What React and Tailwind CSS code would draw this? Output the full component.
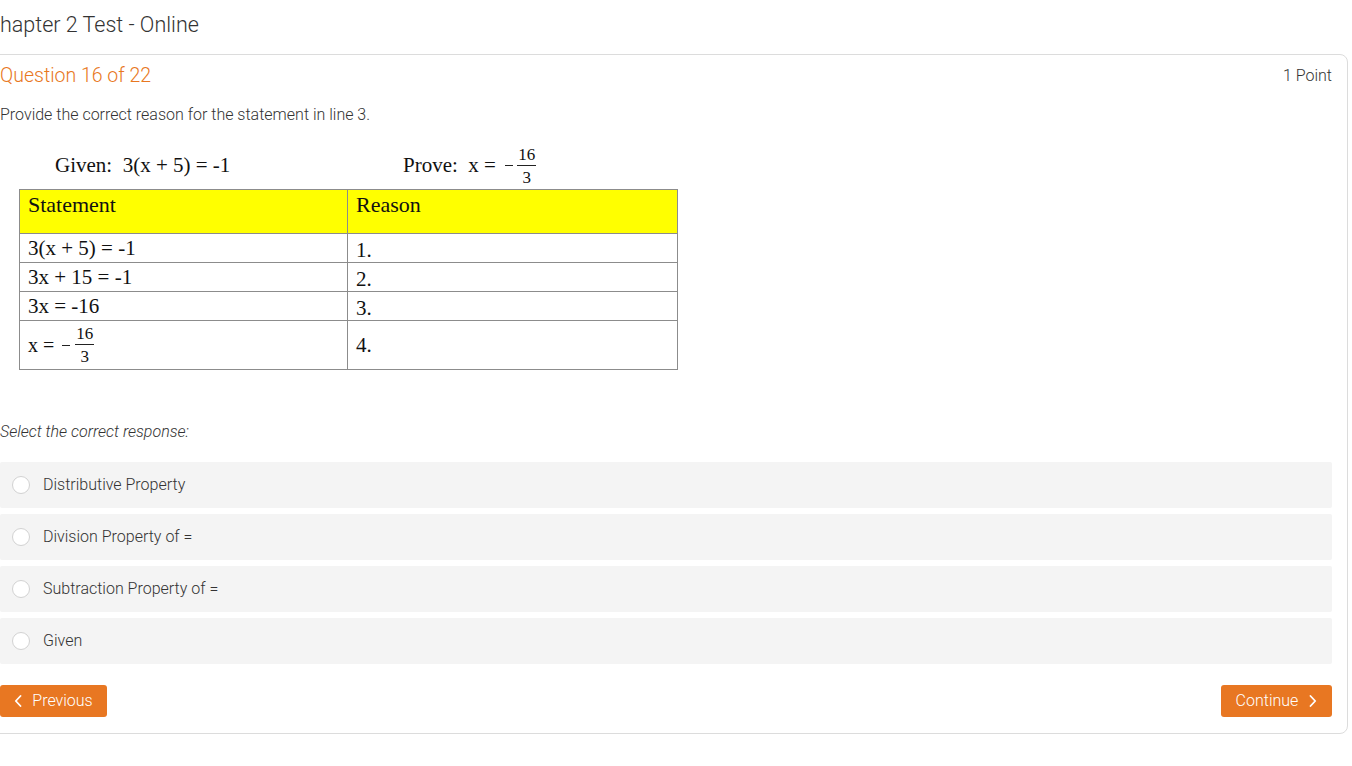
import React from "react";

const serif = { fontFamily: '"Liberation Serif", "Times New Roman", serif' };

function Frac({ n, d, size = "text-[17px]" }) {
  return (
    <span className={`inline-flex flex-col items-center align-middle leading-none ${size}`}>
      <span className="px-[1px] pb-[2px]">{n}</span>
      <span className="h-[1px] w-full bg-[#222]" />
      <span className="px-[1px] pt-[3px]">{d}</span>
    </span>
  );
}

function Chevron({ dir }) {
  return (
    <svg width="8" height="12" viewBox="0 0 8 12" fill="none" className="shrink-0">
      {dir === "left" ? (
        <path d="M6.5 1 L1.8 6 L6.5 11" stroke="white" strokeWidth="1.8" strokeLinecap="round" strokeLinejoin="round" />
      ) : (
        <path d="M1.5 1 L6.2 6 L1.5 11" stroke="white" strokeWidth="1.8" strokeLinecap="round" strokeLinejoin="round" />
      )}
    </svg>
  );
}

function Option({ label }) {
  return (
    <div className="flex h-[46px] items-center rounded-[2px] bg-[#f4f4f4] pl-[12px]">
      <span className="h-[18px] w-[18px] shrink-0 rounded-full border border-[#d2d2d2] bg-white" />
      <span className="ml-[13px] text-[16px] font-light text-[#333]">{label}</span>
    </div>
  );
}

export default function App() {
  const rows = [
    { s: "3(x + 5) = -1", r: "1.", h: "h-[29px]" },
    { s: "3x + 15 = -1", r: "2.", h: "h-[29px]" },
    { s: "3x = -16", r: "3.", h: "h-[29px]" },
  ];
  return (
    <div className="min-h-[766px] bg-white" style={{ fontFamily: 'Roboto, "Noto Sans", Arial, sans-serif' }}>
      <div className="-ml-[16px] w-[1364px]">
        <div className="h-[54px] pl-[2px] pt-[11px] text-[21.5px] font-light leading-[28px] text-[#333]">
          Chapter 2 Test - Online
        </div>
        <div className="rounded-[8px] border border-[#dcdcdc] px-[15px] pb-[16px]">
          <div className="flex items-center justify-between pt-[9px]">
            <div className="text-[19.5px] font-light leading-[24px] text-[#e87722]">Question 16 of 22</div>
            <div className="text-[16px] font-light leading-[24px] text-[#333]">1 Point</div>
          </div>
          <div className="mt-[17px] text-[16px] font-light leading-[20px] text-[#333]">
            Provide the correct reason for the statement in line 3.
          </div>

          <div style={serif} className="text-[#111]">
            <div className="mt-[20px] flex h-[44px] items-center pb-[3px] text-[21px]">
              <span className="ml-[55px] w-[348px] whitespace-pre">Given:  3(x + 5) = -1</span>
              <span className="flex items-center whitespace-pre">
                <span>Prove:  x = </span>
                <span className="mx-[4px] inline-block h-[1px] w-[8px] bg-[#222]" />
                <Frac n="16" d="3" />
              </span>
            </div>
            <table className="ml-[19px] w-[659px] border-collapse">
              <tbody>
                <tr className="h-[44px] bg-[#ffff00]">
                  <td className="w-[328px] border-[1.5px] border-[#8c8c8c] px-[8px] pb-[14px] text-[22px] leading-[26px]">Statement</td>
                  <td className="border-[1.5px] border-[#8c8c8c] px-[8px] pb-[14px] text-[22px] leading-[26px]">Reason</td>
                </tr>
                {rows.map((row) => (
                  <tr key={row.r} className={row.h}>
                    <td className="border-[1.5px] border-[#8c8c8c] px-[8px] text-[21px] leading-[24px]">{row.s}</td>
                    <td className="border-[1.5px] border-[#8c8c8c] px-[8px] pt-[4px] text-[21px] leading-[24px]">{row.r}</td>
                  </tr>
                ))}
                <tr className="h-[49px]">
                  <td className="border-[1.5px] border-[#8c8c8c] px-[8px] text-[20px]">
                    <span className="flex items-center">
                      <span>x =</span>
                      <span className="ml-[8px] mr-[5px] inline-block h-[1px] w-[8px] bg-[#222]" />
                      <Frac n="16" d="3" />
                    </span>
                  </td>
                  <td className="border-[1.5px] border-[#8c8c8c] px-[8px] pt-[2px] text-[21px]">4.</td>
                </tr>
              </tbody>
            </table>
          </div>

          <div className="mt-[52px] text-[16px] font-light italic leading-[20px] text-[#333]">
            Select the correct response:
          </div>
          <div className="mt-[20px] flex flex-col gap-[6px]">
            <Option label="Distributive Property" />
            <Option label="Division Property of =" />
            <Option label="Subtraction Property of =" />
            <Option label="Given" />
          </div>
          <div className="mt-[21px] flex items-center justify-between">
            <button className="flex h-[32px] w-[107px] items-center justify-center gap-[10px] rounded-[3px] bg-[#e87722] text-[16px] font-light text-white">
              <Chevron dir="left" />
              <span>Previous</span>
            </button>
            <button className="flex h-[32px] w-[111px] items-center justify-center gap-[11px] rounded-[3px] bg-[#e87722] text-[16px] font-light text-white">
              <span>Continue</span>
              <Chevron dir="right" />
            </button>
          </div>
        </div>
      </div>
    </div>
  );
}
